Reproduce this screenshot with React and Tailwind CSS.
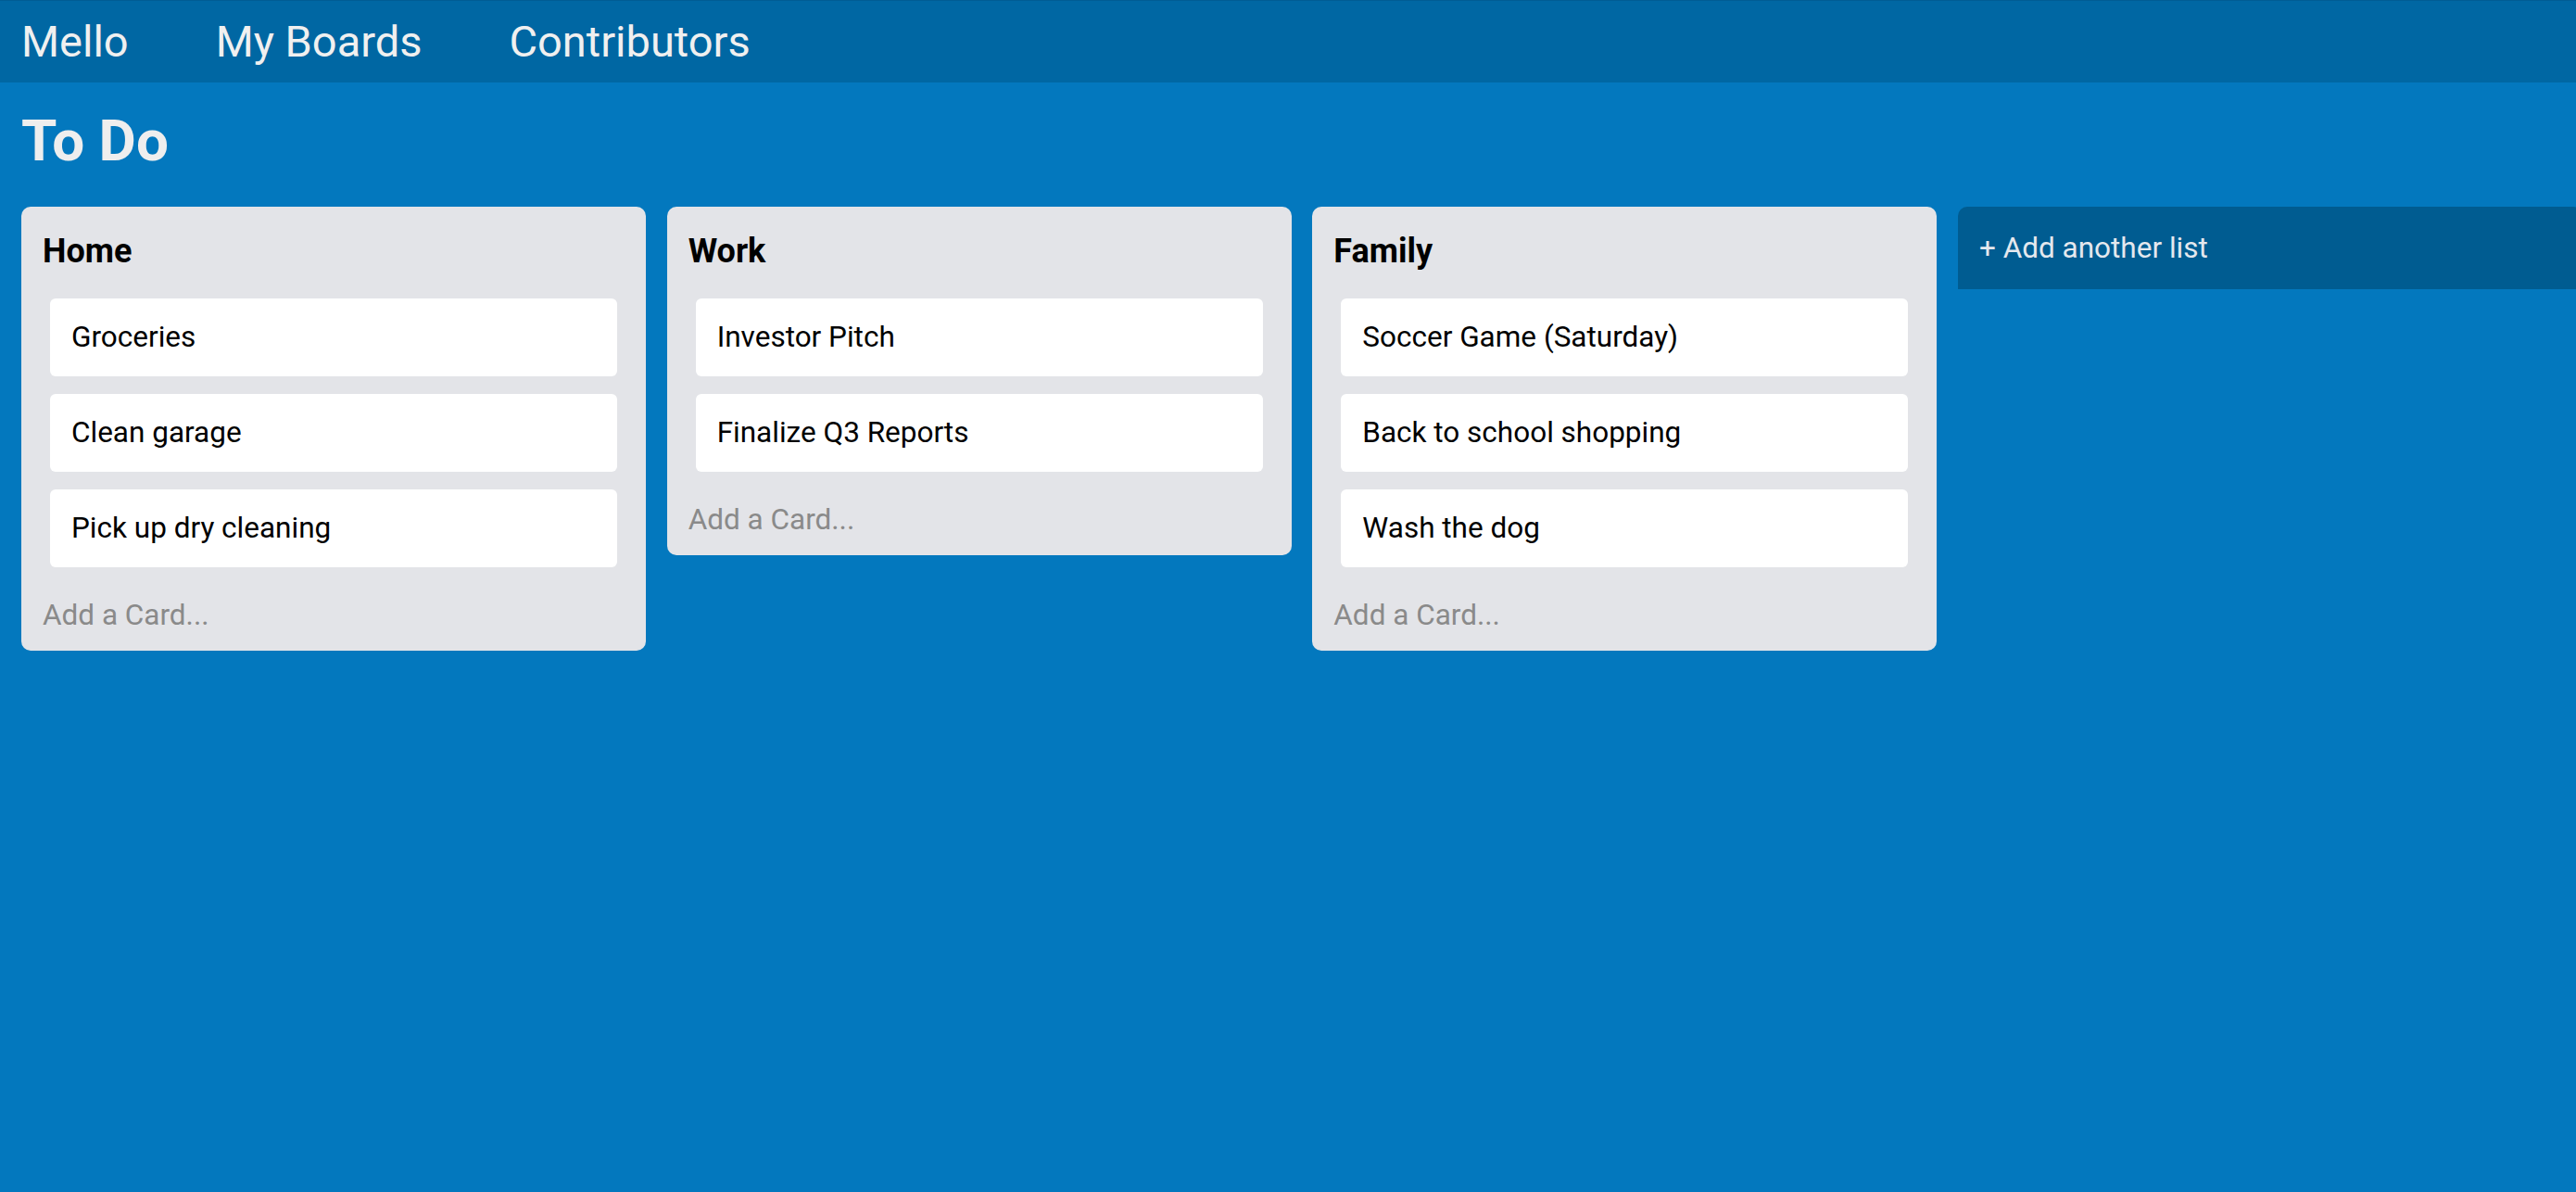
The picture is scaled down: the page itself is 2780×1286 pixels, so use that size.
import { useState } from "react";

const LISTS = [
  { id: 1, title: "Home", cards: ["Groceries", "Clean garage", "Pick up dry cleaning"] },
  { id: 2, title: "Work", cards: ["Investor Pitch", "Finalize Q3 Reports"] },
  { id: 3, title: "Family", cards: ["Soccer Game (Saturday)", "Back to school shopping", "Wash the dog"] },
];

// --- CARTE ---
const Card = ({ text }) => (
  <div className="mx-[8px] h-[84px] flex items-center px-[23px] bg-white rounded-[6px] text-[31.5px] leading-none text-black">
    {text}
  </div>
);

// --- LISTE ---
const List = ({ list }) => (
  <div className="w-[674px] shrink-0 bg-[#e3e4e8] rounded-[10px] px-[23px] pt-[30px] pb-[22px]">
    <h2 className="text-[36px] leading-none font-bold text-black">{list.title}</h2>
    <div className="flex flex-col gap-[19px] mt-[33px]">
      {list.cards.map((c) => (
        <Card key={c} text={c} />
      ))}
    </div>
    <button type="button" className="block mt-[36px] text-[31.5px] leading-none text-[#8a8a8a] text-left">
      Add a Card...
    </button>
  </div>
);

export default function App() {
  const [lists] = useState(LISTS);

  return (
    <div
      className="min-h-screen overflow-hidden bg-[#0378be]"
      style={{ fontFamily: "Roboto, 'Liberation Sans', sans-serif" }}
    >
      <nav className="h-[89px] bg-[#0067a3] border-t border-[#005c94] flex items-center gap-[94px] pl-[23px] text-[47px] text-[#f0f0f0]">
        <a href="#">Mello</a>
        <a href="#">My Boards</a>
        <a href="#">Contributors</a>
      </nav>

      <div className="px-[23px]">
        <h1 className="mt-[32px] text-[62px] leading-none font-bold text-[#eeeeee]">To Do</h1>

        <div className="flex items-start gap-[22.67px] mt-[40px]">
          {lists.map((l) => (
            <List key={l.id} list={l} />
          ))}

          <button
            type="button"
            className="w-[674px] shrink-0 h-[89px] flex items-center px-[23px] bg-[#005c91] rounded-t-[10px] text-[31.5px] leading-none text-[#e4e8ee] text-left"
          >
            + Add another list
          </button>
        </div>
      </div>
    </div>
  );
}
